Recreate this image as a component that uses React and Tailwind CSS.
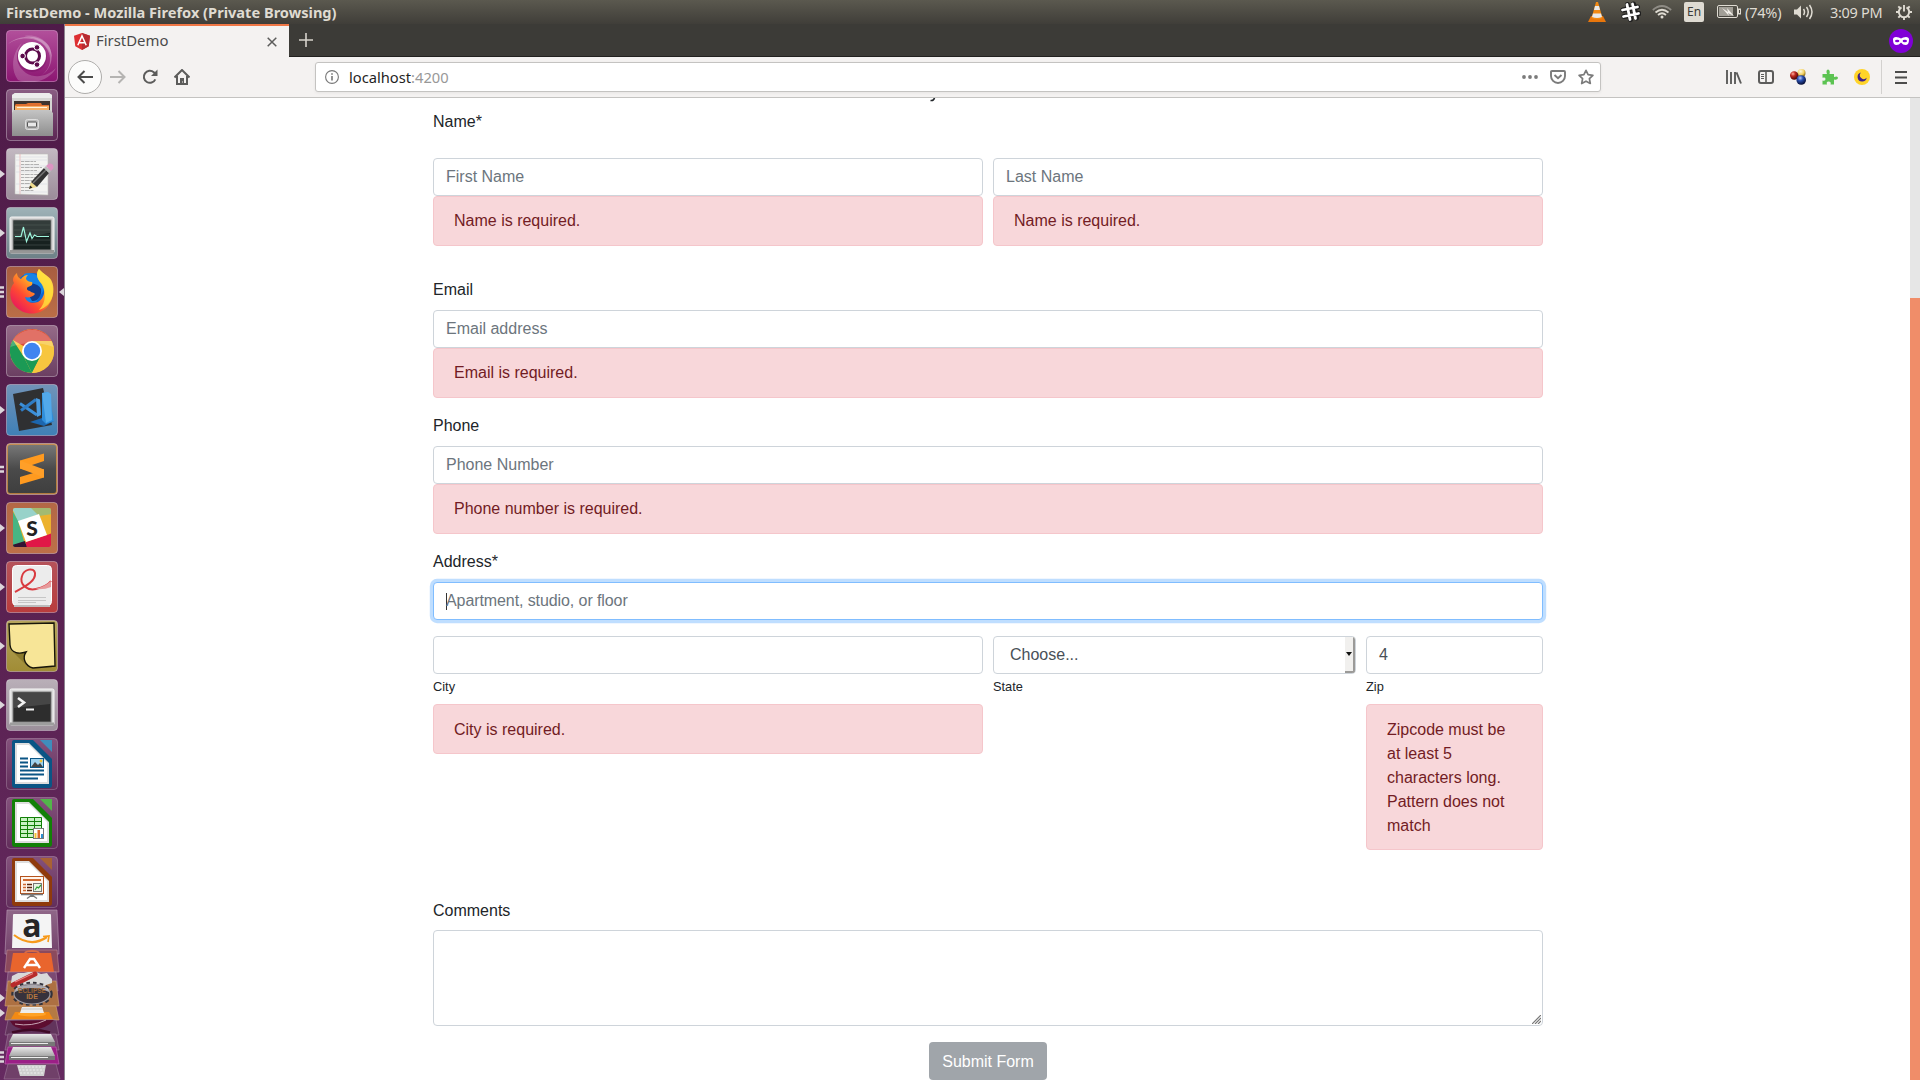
import React from "react";

const UI = "font-['Noto_Sans',sans-serif]";

/* ---------- Launcher icons (52x52 tiles) ---------- */

function Tile({ from, to, border = "#ffffff", borderOpacity = 0.35, children, id }) {
  return (
    <svg width="52" height="52" viewBox="0 0 52 52" className="block shrink-0">
      <defs>
        <linearGradient id={id} x1="0" y1="0" x2="0" y2="1">
          <stop offset="0" stopColor={from} />
          <stop offset="1" stopColor={to} />
        </linearGradient>
      </defs>
      <rect x="0.5" y="0.5" width="51" height="51" rx="3.5" fill={`url(#${id})`} stroke={border} strokeOpacity={borderOpacity} />
      {children}
    </svg>
  );
}

const DashIcon = () => (
  <Tile id="t-dash" from="#b2509b" to="#8c1672" border="#e9a8dc" borderOpacity={0.5}>
    <path d="M2 14C14 4 34 4 43 16C49 28 44 40 36 45C48 36 46 20 34 12C24 6 10 8 2 14Z" fill="#fff" opacity="0.28" />
    <path d="M12 50C4 40 6 22 16 13C8 24 10 36 20 43C30 49 42 46 50 38C44 50 26 56 12 50Z" fill="#fff" opacity="0.2" />
    <path d="M18 6C34 3 46 14 46 28C42 14 32 8 18 6Z" fill="#fff" opacity="0.2" />
    <circle cx="26" cy="27" r="15" fill="#6e0d5c" opacity="0.3" />
    <circle cx="26" cy="26" r="14" fill="#fff" />
    <circle cx="26.500" cy="26" r="7" fill="none" stroke="#5c0b4b" strokeWidth="3" />
    <g fill="#5c0b4b" stroke="#fff" strokeWidth="1">
      <circle cx="16.600" cy="26" r="2.800" />
      <circle cx="31" cy="17.400" r="2.800" />
      <circle cx="31" cy="34.600" r="2.800" />
    </g>
  </Tile>
);

const FilesIcon = () => (
  <Tile id="t-files" from="#8a5d83" to="#5c2754">
    <path d="M6 6L9 4H43L46 6V44H6Z" fill="#d5d5d3" />
    <path d="M6 6L9 4H43L46 6V9H6Z" fill="#ececec" />
    <rect x="8" y="12" width="36" height="12" fill="#3e342f" />
    <path d="M9 16L10 15H20L22 14H35L36 16H43V22H9Z" fill="#e07030" />
    <rect x="9" y="17" width="34" height="5" fill="#f6b067" />
    <rect x="11" y="18" width="30" height="1" fill="#fff1dd" />
    <path d="M6 24L8 21H44L47 24V47H6Z" fill="url(#drawer)" />
    <defs>
      <linearGradient id="drawer" x1="0" y1="0" x2="0" y2="1">
        <stop offset="0" stopColor="#c4c4c4" />
        <stop offset="1" stopColor="#8e8e8e" />
      </linearGradient>
    </defs>
    <rect x="19.5" y="30.5" width="13" height="10" rx="2" fill="#bcbcbc" stroke="#dedede" />
    <rect x="21.5" y="33" width="9" height="5" rx="0.5" fill="#e8e8e8" stroke="#555" />
  </Tile>
);

const EditorIcon = () => (
  <Tile id="t-edit" from="#c3b9c2" to="#9b8c99">
    <path d="M9 6H42V47L9 46Z" fill="#f3f3f1" stroke="#bdbdb9" strokeWidth="0.6" />
    <path d="M14 6V46" stroke="#eeb2b2" strokeWidth="0.8" />
    <g stroke="#cdd3de" strokeWidth="0.5">
      <path d="M10 9H41M10 12H41M10 18H41M10 24H41M10 36H41M10 44H41" />
    </g>
    <path
      d="M15 13.5H30M15 16.5H33M15 19.5H36M15 22.5H31M15 26.5H34M15 29.5H30M15 32.5H26M15 35.5H25M15 39.5H23M15 42.5H28"
      stroke="#a9a9a9"
      strokeWidth="0.9"
      strokeDasharray="3 0.7 5 0.7"
    />
    <path d="M23 41L25 34L31 39Z" fill="#f0dc8c" />
    <path d="M25 34L38 20L43 25L31 39Z" fill="#333" />
    <path d="M27 35L40 22" stroke="#777" strokeWidth="1.5" />
    <path d="M38 20L40 18L45 23L43 25Z" fill="#bdbdbd" />
    <path d="M40 18L43 15.5Q48 15 47.5 20L45 23Z" fill="#dd94c2" />
    <path d="M23 41L24 37.5L26.5 39.5Z" fill="#222" />
  </Tile>
);

const MonitorIcon = () => (
  <Tile id="t-mon" from="#9fb3b8" to="#6d8087">
    <rect x="4" y="10" width="44" height="36" rx="1.5" fill="#d6d6d6" stroke="#f5f5f5" />
    <rect x="4" y="43" width="44" height="3.5" fill="#969696" />
    <rect x="7" y="13" width="38" height="30" fill="#17211f" stroke="#8a8a8a" />
    <path d="M8 14H44V26L8 32Z" fill="#fff" opacity="0.12" />
    <path d="M8 18H44M8 23H44M8 28H44M8 33H44M8 38H44" stroke="#54605e" strokeWidth="0.5" />
    <path d="M9 29.500H15L17.500 20L20.500 34.500L24 26L26 31.500L28.500 28L31 29.500H43" fill="none" stroke="#9ff5dd" strokeWidth="1.200" />
  </Tile>
);

const FirefoxIcon = () => (
  <Tile id="t-ff" from="#a75d40" to="#bb6e47">
    <defs>
      <linearGradient id="ffbody" x1="0.9" y1="0" x2="0.1" y2="0.9">
        <stop offset="0" stopColor="#fff25a" />
        <stop offset="0.4" stopColor="#ffad24" />
        <stop offset="0.7" stopColor="#ff4a32" />
        <stop offset="1" stopColor="#e7155f" />
      </linearGradient>
    </defs>
    <circle cx="26" cy="24" r="17" fill="#0a66d6" />
    <path d="M18 8C30 4 38 14 38 24L30 36H16Z" fill="#1583e6" />
    <path d="M18 20C24 15 33 18 35 23C36 30 31 36 26 35Z" fill="#123c8c" />
    <path d="M11 7C7 10 6 14 8 17C2 24 4 35 9 40C18 50 34 50 42 40C49 31 48 20 46 16C45 11 37 8 33 3C29 8 32 14 36 18C40 23 39 32 32 36C26 38 20 36 19 31C22 32 27 31 29 28C28 26 25 27 24 25C21 25 20 22 22 21C26 20 27 18 26 16C23 16 21 15 20 13C20 11 21 10 22 9C19 9 16 11 15 13C12 12 11 9 11 7Z" fill="url(#ffbody)" />
    <path d="M33 3C38 9 48 15 47 27C46 36 40 42 33 44C41 36 40 25 35 17C30 12 30 7 33 3Z" fill="#ffe13d" opacity="0.8" />
  </Tile>
);

const ChromeIcon = () => (
  <Tile id="t-chrome" from="#956b88" to="#6b3f62">
    <circle cx="26" cy="26" r="22" fill="#f7c63f" />
    <path d="M26 26L6.900 15A22 22 0 0 1 45.600 16H26Z" fill="#d9493c" />
    <path d="M6.900 15L17.300 31L26 48A22 22 0 0 1 6.900 15Z" fill="#1b9a55" />
    <path d="M17.300 31L26 48L34.700 31Z" fill="#1b9a55" />
    <path d="M34.700 31L26 48H28A22 22 0 0 0 45.600 16H26Z" fill="#f7c63f" />
    <path d="M4.500 22A22 22 0 0 1 47.500 22Q26 14 4.500 22Z" fill="#fff" opacity="0.22" />
    <circle cx="26" cy="26" r="10" fill="#fff" />
    <circle cx="26" cy="26" r="8.200" fill="#4084f0" />
  </Tile>
);

const CodeIcon = () => (
  <Tile id="t-code" from="#7193b8" to="#3f80b6">
    <path d="M7 10L37 4L46 41L13 47Z" fill="#2f3032" />
    <path d="M24 38L36 34L48 37L38 42Z" fill="#1c66ae" />
    <path d="M36 9L42 8L48 37L40 40L36 36Z" fill="#2f8edb" />
    <path d="M36 9L42 8L45 10L46 36L40 39Z" fill="#52a9ea" />
    <path d="M14 19.500L31 31" stroke="#3c8fd8" strokeWidth="3" />
    <path d="M15 26.500L30 15.500" stroke="#2f7cc4" strokeWidth="3" />
    <path d="M30 14L34 15.500L35 31L31 33Z" fill="#4a9be0" />
  </Tile>
);

const SublimeIcon = () => (
  <Tile id="t-sub" from="#c58c50" to="#b27b3d">
    <defs>
      <linearGradient id="subl" x1="0" y1="0" x2="0" y2="1">
        <stop offset="0" stopColor="#777" />
        <stop offset="0.5" stopColor="#4a4a4a" />
        <stop offset="1" stopColor="#3f3f3f" />
      </linearGradient>
    </defs>
    <rect x="2" y="2" width="48" height="48" rx="2" fill="url(#subl)" />
    <path d="M14 17.500L38 10.500V18L23 23L38 26.500V34.500L14 41.500V34L29 29.500L14 25.500Z" fill="#ff9a1f" />
    <path d="M14 17.500L38 26.500V34.500L14 25.500Z" fill="#ff9f28" />
  </Tile>
);

const SlackIcon = () => (
  <Tile id="t-slack" from="#b36846" to="#bd7048">
    <defs><clipPath id="sq"><rect x="7" y="6" width="38" height="39" rx="2" /></clipPath></defs>
    <g clipPath="url(#sq)">
      <rect x="6" y="6" width="40" height="40" fill="#ecb22e" />
      <path d="M6 6H31L33 12L12 20Z" fill="#98d2c9" />
      <path d="M25 6H46V12L33 14Z" fill="#a3ba72" />
      <path d="M6 8L12 19L20 46H6Z" fill="#47b583" />
      <path d="M20 40L41 33L46 31V46H20Z" fill="#e01747" />
      <path d="M6 43L19 39L21 46H6Z" fill="#331433" />
    </g>
    <path d="M12 19L33 12L41 33L20 40Z" fill="#fff" />
    <text x="26" y="33.500" textAnchor="middle" fontFamily="Lato, sans-serif" fontWeight="900" fontSize="21" fill="#222">S</text>
  </Tile>
);

const PdfIcon = () => (
  <Tile id="t-pdf" from="#b5535a" to="#b93c3c">
    <rect x="6.500" y="4.500" width="39" height="40" rx="4" fill="#ececec" stroke="#fff" />
    <path d="M9 31C20 25 30 20 29 12C28 6 18 8 16 15C13 24 22 30 30 28C38 26 42 24 45 20" fill="none" stroke="#d93b40" strokeWidth="2" />
    <path d="M29 28Q38 26 45 20V26Q38 29 29 28Z" fill="#e79a9b" />
    <path d="M12 36.500H40M12 39.500H40M12 41.500H30" stroke="#c6c6c6" strokeWidth="1" />
    <rect x="8" y="44" width="36" height="2" fill="#bbb" />
  </Tile>
);

const NotesIcon = () => (
  <Tile id="t-note" from="#b6a55e" to="#a08c35">
    <path d="M5 30C8 34 16 33 19 33C17 37 18 42 21 46Z" fill="#8b7a2c" />
    <path d="M3 4L48 3L49 46L27 48C19 46 16 38 20 32C14 34 5 34 4 25Z" fill="#f7e597" stroke="#17150a" strokeWidth="1.400" />
  </Tile>
);

const TerminalIcon = () => (
  <Tile id="t-term" from="#b9afb8" to="#9b8f9a">
    <rect x="4" y="10" width="44" height="36" rx="1.500" fill="#dadada" stroke="#f8f8f8" />
    <rect x="4" y="43.500" width="44" height="3" fill="#9d9d9d" />
    <rect x="7" y="13" width="38" height="30" fill="#2d2d2d" stroke="#777" />
    <path d="M8 14H44V25L8 29Z" fill="#fff" opacity="0.12" />
    <path d="M12 19L18 23.500L12 28" fill="none" stroke="#f2f2f2" strokeWidth="2.600" />
    <path d="M20 30.500H28" stroke="#f2f2f2" strokeWidth="2" />
  </Tile>
);

function OfficePage({ id, dark, light, children }) {
  return (
    <Tile id={id} from="#84527c" to="#622e5b" borderOpacity={0.22}>
      <path d="M8 2H27L46 21V47Q46 50 43 50H9Q6 50 6 47V4Q6 2 8 2Z" fill={dark} />
      <path d="M9 5H23L43 25V46H9Z" fill="#dedede" />
      <path d="M11 44V7H23L41 25V44Z" fill="#fff" />
      <path d="M34 2H46V14Z" fill={light} />
      {children}
    </Tile>
  );
}

const WriterIcon = () => (
  <OfficePage id="t-wr" dark="#0a5585" light="#3f8dbb">
    <path d="M14 20.500H22M14 24.500H22M14 28.500H22M14 32.500H38M14 36.500H38M14 40.500H32" stroke="#0a5585" strokeWidth="2" />
    <rect x="24.500" y="20.500" width="13" height="9" fill="#9fd2ee" stroke="#0a5585" />
    <path d="M25 29L29 24L32 27L34 25L37 29Z" fill="#444" />
    <circle cx="35" cy="23" r="1.400" fill="#f3c334" />
  </OfficePage>
);

const CalcIcon = () => (
  <OfficePage id="t-ca" dark="#128007" light="#52b54a">
    <rect x="14" y="20" width="22" height="21" fill="#c9f2c4" />
    <path d="M14.500 20.500H35.500V40.500H14.500ZM14 24.500H36M14 28.500H36M14 32.500H36M14 36.500H36M21.500 20V41M28.500 20V41" fill="none" stroke="#128007" />
    <rect x="27.500" y="31.500" width="10" height="10" fill="#fff" stroke="#777" />
    <rect x="28.500" y="36" width="2" height="5" fill="#f3c334" />
    <rect x="31.500" y="33" width="2.500" height="8" fill="#d9692a" />
    <rect x="35" y="37" width="2" height="4" fill="#2d8fd0" />
  </OfficePage>
);

const ImpressIcon = () => (
  <OfficePage id="t-im" dark="#8f3a0c" light="#a86234">
    <rect x="14.500" y="20.500" width="23" height="17" fill="#fff5ec" stroke="#b5521c" />
    <rect x="17" y="23" width="18" height="2" fill="#cf6a32" />
    <path d="M17 28.500H20M17 31.500H20M17 34.500H20" stroke="#cf6a32" strokeWidth="1.600" />
    <path d="M21 28.500H26M21 31.500H26M21 34.500H26" stroke="#5b2a12" strokeWidth="1.600" />
    <rect x="27.500" y="27.500" width="8" height="8" fill="#e7f5e3" stroke="#777" />
    <path d="M29 34L31 31L32.500 32L35 29" stroke="#2e9d35" fill="none" strokeWidth="1.200" />
    <path d="M15 38.500H37M26 38V41M26 39L21 42.500M26 39L31 42.500" stroke="#777" strokeWidth="1.400" />
  </OfficePage>
);

/* Folded icons at the foot of the launcher, 64x172 */
const FoldedStack = () => (
  <svg width="64" height="172" viewBox="0 0 64 172" className="block shrink-0 overflow-visible">
    <defs>
      <linearGradient id="amz" x1="0" y1="0" x2="0" y2="1">
        <stop offset="0" stopColor="#8f6788" />
        <stop offset="1" stopColor="#73416b" />
      </linearGradient>
      <linearGradient id="disk" x1="0" y1="0" x2="0" y2="1">
        <stop offset="0" stopColor="#e8e8e8" />
        <stop offset="1" stopColor="#a8a8a8" />
      </linearGradient>
    </defs>
    <path d="M7 2H57L59 46H5Z" fill="url(#amz)" stroke="#b99ab4" strokeOpacity="0.600" />
    <path d="M13 7Q13 6 14 6H50Q51 6 51 7L52 40H12Z" fill="#f4f4f4" />
    <text x="32" y="29" textAnchor="middle" fontFamily="'Open Sans', sans-serif" fontWeight="700" fontSize="32" fill="#262626">a</text>
    <path d="M14 27Q31 40 47 29" fill="none" stroke="#f79a1c" strokeWidth="2.200" />
    <path d="M43 28.500L49 28L48 34" fill="none" stroke="#f79a1c" strokeWidth="1.600" />

    <path d="M7 42H57L59 64H5Z" fill="#8b4a5d" stroke="#c89aa4" strokeOpacity="0.500" />
    <path d="M13 45H51L54 64H10Z" fill="#e9652d" />
    <path d="M25 45Q26 43 32 43Q38 43 39 45" fill="none" stroke="#d96b45" strokeWidth="2" />
    <path d="M24 60L30 51H34L40 60M26 57H38" fill="none" stroke="#fff" strokeWidth="2.400" />

    <path d="M8 64H56L58 83H6Z" fill="#7b4a73" stroke="#b794b1" strokeOpacity="0.500" />
    <path d="M8 73H56L59 98H5Z" fill="#ad7042" stroke="#d3a57d" strokeOpacity="0.600" />
    <path d="M12 68L18 65H24L28 64H36L41 66L47 65L49 68L52 71V75L46 77L42 80H24L16 78L11 75Z" fill="#d9d9d9" />
    <path d="M13 77L35 66" stroke="#b72b2b" strokeWidth="5" strokeLinecap="round" />
    <path d="M15 74L33 65.500" stroke="#e98282" strokeWidth="1.200" />

    <ellipse cx="32" cy="86" rx="19" ry="10.500" fill="none" stroke="#33323a" strokeWidth="3.500" strokeDasharray="3.500 3" />
    <ellipse cx="32" cy="86" rx="18" ry="10" fill="#37323c" stroke="#9b98a0" strokeWidth="1.200" />
    <path d="M15 84Q32 76 49 84L48 80Q32 73 16 80Z" fill="#c7c6ca" opacity="0.8" />
    <text x="32" y="85" textAnchor="middle" fontFamily="'Liberation Sans', sans-serif" fontWeight="700" fontSize="6.500" fill="#9c6432">ECLIPSE</text>
    <text x="32" y="91" textAnchor="middle" fontFamily="'Liberation Sans', sans-serif" fontWeight="700" fontSize="7" fill="#b8793f">IDE</text>

    <path d="M8 98H56L59 112H5Z" fill="#b57a43" stroke="#d3a57d" strokeOpacity="0.600" />
    <path d="M15 104H49L53 111H11Z" fill="#f38a13" />
    <ellipse cx="32" cy="106" rx="14" ry="2.500" fill="#ffa227" />
    <path d="M22 99H42L44 105H20Z" fill="#ededed" />
    <path d="M21 101H43" stroke="#c9c9c9" />

    <path d="M8 112H56L59 127H5Z" fill="#62345c" stroke="#a886a3" strokeOpacity="0.500" />
    <path d="M10 113Q14 122 30 121.500Q46 122 54 112Z" fill="#5d0d30" />
    <path d="M15 116Q32 119 46 112" stroke="#c7a5b4" strokeWidth="1" fill="none" />
    <path d="M12 124.500Q32 119 50 124.500" fill="none" stroke="#3f0a26" strokeWidth="2.500" />

    <path d="M8 126H56L59 142H5Z" fill="#75436e" stroke="#a886a3" strokeOpacity="0.500" />
    <path d="M8 139H56L59 156H5Z" fill="#9b1f86" stroke="#c567b7" strokeOpacity="0.600" />
    <path d="M13 126H51L55 134H9Z" fill="url(#disk)" />
    <path d="M9 134H55V138H9Z" fill="#777" />
    <path d="M11 135.500H48" stroke="#e9e9e9" strokeWidth="1" />

    <path d="M13 139H51L55 148H9Z" fill="url(#disk)" />
    <path d="M9 148H55V152H9Z" fill="#777" />
    <path d="M11 149.500H48" stroke="#efefef" strokeWidth="1" />

    <path d="M8 156H56L60 171H4Z" fill="#704069" stroke="#a886a3" strokeOpacity="0.500" />
    <path d="M17 157H46L44 168H20Z" fill="#cfcfcf" />
    <path d="M18 159H45M19 162H44M20 165H43" stroke="#efefef" strokeWidth="1.200" strokeDasharray="2 1.500" />
  </svg>
);

const LAUNCHER = [
  { icon: DashIcon, mark: 0 },
  { icon: FilesIcon, mark: 0 },
  { icon: EditorIcon, mark: 1 },
  { icon: MonitorIcon, mark: 1 },
  { icon: FirefoxIcon, mark: 3, active: true },
  { icon: ChromeIcon, mark: 0 },
  { icon: CodeIcon, mark: 1 },
  { icon: SublimeIcon, mark: 2 },
  { icon: SlackIcon, mark: 1 },
  { icon: PdfIcon, mark: 1 },
  { icon: NotesIcon, mark: 1 },
  { icon: TerminalIcon, mark: 1 },
  { icon: WriterIcon, mark: 0 },
  { icon: CalcIcon, mark: 0 },
  { icon: ImpressIcon, mark: 0 },
];

/* Running-window marks: an arrow for one window, bars for several */
function Mark({ n }) {
  return (
    <svg width="6" height="12" viewBox="0 0 6 12" className="block shrink-0">
      {n === 1 && <path d="M0 2L5 6L0 10Z" fill="#dcd6db" />}
      {n === 2 && <path d="M0 4H4M0 8.500H4" stroke="#dcd6db" strokeWidth="2.400" />}
      {n === 3 && <path d="M0 1.500H4M0 6H4M0 10.500H4" stroke="#dcd6db" strokeWidth="2.400" />}
    </svg>
  );
}

function Launcher() {
  return (
    <aside className="relative flex w-[65px] shrink-0 flex-col overflow-hidden border-r border-[#8d8390] bg-gradient-to-b from-[#4f1b49] via-[#592150] to-[#652a60] pt-[6px]">
      <div className="flex flex-col gap-[7px]">
        {LAUNCHER.map(({ icon: Icon, mark, active }, i) => (
          <div key={i} className="flex h-[52px] items-center">
            <Mark n={mark} />
            <Icon />
            {active && (
              <svg width="6" height="12" viewBox="0 0 6 12" className="ml-px block shrink-0">
                <path d="M5 2L0 6L5 10Z" fill="#dcd6db" />
              </svg>
            )}
          </div>
        ))}
      </div>
      <FoldedStack />
      <svg width="6" height="70" viewBox="0 0 6 70" className="absolute left-0 top-[946px]">
        <path d="M0 24L5 28L0 32Z M0 39L5 43L0 47Z" fill="#dcd6db" />
      </svg>
      <svg width="6" height="12" viewBox="0 0 6 12" className="absolute left-0 top-[1027px]">
        <path d="M0 1.500H4M0 6H4M0 10.500H4" stroke="#dcd6db" strokeWidth="2.400" />
      </svg>
    </aside>
  );
}

/* ---------- System menu bar ---------- */

function MenuBar() {
  return (
    <header className={`flex h-6 shrink-0 items-center bg-gradient-to-b from-[#5b594f] to-[#403e39] pl-[6px] pr-[8px] text-[#dfdbd2] ${UI}`}>
      <span className="w-[340px] whitespace-nowrap text-[14.600px] font-bold leading-6">
        FirstDemo - Mozilla Firefox (Private Browsing)
      </span>
      <div className="ml-auto flex items-center">
        <svg width="18" height="20" viewBox="0 0 18 20" className="mr-[13px]">
          <path d="M3 14H15L18 20H0Z" fill="#e8760c" />
          <path d="M8 0H10L14.500 16Q9 19 3.500 16Z" fill="#f28a14" />
          <path d="M7 4H11L12 8H6Z M5 11.500H13L14 15Q9 17 4 15Z" fill="#e9e9e9" />
        </svg>
        <svg width="22" height="22" viewBox="0 0 22 22" className="mr-[11px]">
          <g fill="none" strokeLinecap="round">
            <path d="M8.500 3.500L11.500 18.500M14.500 3L17.500 17M4 9L18.500 6M5 15.500L20 12.500" stroke="#1f1f1f" strokeWidth="5" />
            <path d="M8 3.500L11 18.500M13.500 3L16.500 17.500M3.500 9L18.500 6M4.500 15.500L19.500 12.500" stroke="#fff" strokeWidth="2.800" />
          </g>
        </svg>
        <svg width="20" height="16" viewBox="0 0 20 16" className="mr-[12px]">
          <g fill="none" strokeWidth="1.700">
            <path d="M0.800 6Q10 -2 19.200 6" stroke="#8f8c85" />
            <path d="M3.500 8.500Q10 3 16.500 8.500" stroke="#dfdbd2" />
            <path d="M6 11Q10 7.500 14 11" stroke="#dfdbd2" />
          </g>
          <circle cx="10" cy="13" r="1.500" fill="#dfdbd2" />
        </svg>
        <span className="mr-[13px] flex h-5 w-5 items-center justify-center rounded-[2px] bg-[#dfdbd2] text-[12px] text-[#3c3b37]">En</span>
        <svg width="24" height="14" viewBox="0 0 24 14" className="mr-[4px]">
          <rect x="0.500" y="0.500" width="20" height="12" rx="1.500" fill="none" stroke="#dfdbd2" />
          <rect x="21.500" y="4" width="2" height="5" fill="none" stroke="#dfdbd2" />
          <rect x="2" y="2" width="14" height="9" fill="#a29f97" />
          <path d="M5 3L11 7L10 3L17 11L11 8L12 11Z" fill="#f2efe9" />
        </svg>
        <span className="mr-[12px] w-[37px] whitespace-nowrap text-[14.500px] leading-6 tracking-[-0.2px]">(74%)</span>
        <svg width="20" height="16" viewBox="0 0 20 16" className="mr-[16px]">
          <path d="M0 5.500H3L7 1.500V14.500L3 10.500H0Z" fill="#dfdbd2" />
          <path d="M9.500 5Q11.500 8 9.500 11M12.500 3Q16 8 12.500 13M15.500 1Q20.500 8 15.500 15" fill="none" stroke="#dfdbd2" strokeWidth="1.500" />
        </svg>
        <span className="mr-[13px] w-[53px] whitespace-nowrap text-[14.500px] leading-6 tracking-[-0.3px]">3:09 PM</span>
        <svg width="16" height="16" viewBox="0 0 16 16">
          <path d="M5.500 3.400A5.200 5.200 0 1 0 10.500 3.400" fill="none" stroke="#dfdbd2" strokeWidth="2" />
          <path d="M8 1V7.500M0 8H2.500M13.500 8H16M8 13.500V16M2.300 2.300L4 4M13.700 2.300L12 4M2.300 13.700L4 12M13.700 13.700L12 12" stroke="#dfdbd2" strokeWidth="1.900" />
        </svg>
      </div>
    </header>
  );
}

/* ---------- Browser chrome ---------- */

function TabStrip() {
  return (
    <div className={`flex h-[33px] shrink-0 border-b border-[#22211f] bg-[#3c3b37] ${UI}`}>
      <div className="-mb-px flex h-[33px] w-[224px] items-center border-t-2 border-[#f07746] bg-[#f4f2f1] pl-[9px] pr-[12px]">
        <svg width="16" height="17" viewBox="0 0 16 17" className="shrink-0">
          <path d="M8 0L16 2.800L14.700 13.200L8 17L1.300 13.200L0 2.800Z" fill="#dd2f32" />
          <path d="M8 0L16 2.800L14.700 13.200L8 17Z" fill="#b82b31" />
          <path d="M3.800 12.300L8 2.900L12.200 12.300M5.500 9.700H10.500" fill="none" stroke="#fff" strokeWidth="1.500" />
        </svg>
        <span className="relative -top-px ml-[6px] text-[14.900px] text-[#4a4a4a]">FirstDemo</span>
        <svg width="10" height="10" viewBox="0 0 10 10" className="ml-auto">
          <path d="M0.700 0.700L9.300 9.300M9.300 0.700L0.700 9.300" stroke="#5c5c5b" strokeWidth="1.500" />
        </svg>
      </div>
      <svg width="14" height="14" viewBox="0 0 14 14" className="ml-[10px] mt-[9px]">
        <path d="M7 0V14M0 7H14" stroke="#d6d3cc" strokeWidth="1.600" />
      </svg>
      <svg width="24" height="24" viewBox="0 0 24 24" className="ml-auto mr-[7px] mt-[5px]">
        <circle cx="12" cy="12" r="12" fill="#8000d7" />
        <path d="M4 10.500Q4 8 7 8Q10 8 12 9.500Q14 8 17 8Q20 8 20 10.500Q20 16 16.500 16Q14 16 12 13.500Q10 16 7.500 16Q4 16 4 10.500Z" fill="#fff" />
        <ellipse cx="8.200" cy="12" rx="2.200" ry="1.300" fill="#8000d7" />
        <ellipse cx="15.800" cy="12" rx="2.200" ry="1.300" fill="#8000d7" />
      </svg>
    </div>
  );
}

function Toolbar() {
  return (
    <div className={`flex h-[41px] shrink-0 items-center border-b border-[#c4c3c1] bg-[#f4f2f1] pl-[3px] ${UI}`}>
      <span className="flex h-[34px] w-[34px] items-center justify-center rounded-full border border-[#aeadab] bg-[#fcfcfb]">
        <svg width="16" height="14" viewBox="0 0 16 14">
          <path d="M16 7H1.500M7.500 1L1.500 7L7.500 13" fill="none" stroke="#4c4c4b" strokeWidth="2" />
        </svg>
      </span>
      <svg width="16" height="14" viewBox="0 0 16 14" className="ml-[8px]">
        <path d="M0 7H14.500M8.500 1L14.500 7L8.500 13" fill="none" stroke="#b5b4b2" strokeWidth="2" />
      </svg>
      <svg width="16" height="16" viewBox="0 0 16 16" className="ml-[16px]">
        <path d="M13.300 10.300A6 6 0 1 1 11.800 3.300L13.500 5" fill="none" stroke="#5c5c5b" strokeWidth="2" />
        <path d="M15.500 0.500V7H9Z" fill="#5c5c5b" />
      </svg>
      <svg width="16" height="16" viewBox="0 0 16 16" className="ml-[16px]">
        <path d="M0.500 8.500L8 1L15.500 8.500" fill="none" stroke="#5c5c5b" strokeWidth="2" />
        <path d="M3 7V15H13V7" fill="none" stroke="#5c5c5b" strokeWidth="2" />
        <path d="M6 15V9H10V15H8.500V12H8V15Z" fill="#5c5c5b" />
      </svg>

      <div className="ml-[125px] flex h-[30px] w-[1286px] items-center rounded-[3px] border border-[#c4c3c1] bg-white pl-[9px] pr-[6px] shadow-[0_1px_3px_rgba(0,0,0,0.06)]">
        <svg width="14" height="14" viewBox="0 0 14 14">
          <circle cx="7" cy="7" r="6.400" fill="none" stroke="#777" strokeWidth="1.100" />
          <path d="M7 6V10.500M7 3.300V4.800" stroke="#777" strokeWidth="1.600" />
        </svg>
        <span className="ml-[10px] text-[14.700px] text-[#1f1f1f]">
          localhost<span className="text-[#989898]">:4200</span>
        </span>
        <svg width="16" height="4" viewBox="0 0 16 4" className="ml-auto">
          <circle cx="2" cy="2" r="1.900" fill="#7b7b7b" />
          <circle cx="8" cy="2" r="1.900" fill="#7b7b7b" />
          <circle cx="14" cy="2" r="1.900" fill="#7b7b7b" />
        </svg>
        <svg width="16" height="14" viewBox="0 0 16 14" className="ml-[12px]">
          <path d="M2 1H14Q15 1 15 2V6A7 7 0 0 1 1 6V2Q1 1 2 1Z" fill="none" stroke="#7b7b7b" strokeWidth="1.900" />
          <path d="M4.500 5L8 8.300L11.500 5" fill="none" stroke="#7b7b7b" strokeWidth="1.900" />
        </svg>
        <svg width="16" height="16" viewBox="0 0 16 16" className="ml-[12px]">
          <path d="M8 1.300L10.100 5.700L14.900 6.300L11.400 9.700L12.300 14.500L8 12.200L3.700 14.500L4.600 9.700L1.100 6.300L5.900 5.700Z" fill="none" stroke="#7b7b7b" strokeWidth="1.700" strokeLinejoin="round" />
        </svg>
      </div>

      <div className="ml-auto flex h-full items-center">
        <svg width="16" height="14" viewBox="0 0 16 14">
          <path d="M1 0V14M5 2V14M9 2V14M10.500 2.300L15 13.500" stroke="#5c5c5b" strokeWidth="1.900" fill="none" />
        </svg>
        <svg width="16" height="14" viewBox="0 0 16 14" className="ml-[16px]">
          <rect x="1" y="1" width="14" height="12" rx="2" fill="none" stroke="#5c5c5b" strokeWidth="2" />
          <path d="M8 1V13" stroke="#5c5c5b" strokeWidth="1.600" />
          <path d="M3 4.500H6M3 6.500H6M3 8.500H6" stroke="#5c5c5b" strokeWidth="1" />
        </svg>
        <svg width="16" height="16" viewBox="0 0 16 16" className="ml-[16px]">
          <defs>
            <radialGradient id="ballr" cx="0.35" cy="0.3" r="0.7"><stop offset="0" stopColor="#ffb0a0" /><stop offset="0.4" stopColor="#c02a20" /><stop offset="1" stopColor="#4a0606" /></radialGradient>
            <radialGradient id="bally" cx="0.4" cy="0.3" r="0.7"><stop offset="0" stopColor="#fffbe0" /><stop offset="0.6" stopColor="#f2d060" /><stop offset="1" stopColor="#8a6a10" /></radialGradient>
            <radialGradient id="ballb" cx="0.4" cy="0.3" r="0.7"><stop offset="0" stopColor="#b8ccff" /><stop offset="0.4" stopColor="#2a50b0" /><stop offset="1" stopColor="#060c30" /></radialGradient>
          </defs>
          <circle cx="11.500" cy="4" r="4" fill="url(#bally)" />
          <circle cx="4.200" cy="6.500" r="4.200" fill="url(#ballr)" />
          <circle cx="11.200" cy="11" r="4.800" fill="url(#ballb)" />
        </svg>
        <svg width="16" height="16" viewBox="0 0 16 16" className="ml-[16px]">
          <path d="M0.500 5H5Q3.500 1 6 0.500Q8.500 1 7.500 5H12V8Q16 6.500 16 9Q15.500 11.500 12 10.500V15.500H8.500Q9.500 12.500 6.500 12.500Q4 12.500 5 15.500H0.500V11.500Q3.500 12.500 3.500 10Q3.500 8 0.500 8.800Z" fill="#5cc352" />
        </svg>
        <svg width="16" height="16" viewBox="0 0 16 16" className="ml-[16px]">
          <circle cx="8" cy="8" r="8" fill="#ffd429" />
          <path d="M7 3.500A4.600 4.600 0 1 0 12.700 8.800A3.800 3.800 0 0 1 7 3.500Z" fill="#40208a" />
        </svg>
        <span className="ml-[11px] h-[34px] w-px bg-[#d3d1cf]" />
        <svg width="12" height="13" viewBox="0 0 12 13" className="ml-[13px] mr-[13px]">
          <path d="M0 1H12M0 6.500H12M0 12H12" stroke="#4c4c4b" strokeWidth="1.900" />
        </svg>
      </div>
    </div>
  );
}

/* ---------- Form ---------- */

const FIELD = "flex h-[38px] items-center rounded-[4px] border border-[#ced4da] bg-white px-3 text-[#6c757d]";

const Alert = ({ children, low }) => (
  <div className={`rounded-[4px] border border-[#f5c6cb] bg-[#f8d7da] px-5 text-[#721c24] ${low ? "pb-[11px] pt-[13px]" : "py-3"}`}>
    {children}
  </div>
);

function Group({ label, placeholder, error }) {
  return (
    <div className="mb-4">
      <div className="mb-2">{label}</div>
      <div className={FIELD}>{placeholder}</div>
      <Alert>{error}</Alert>
    </div>
  );
}

const Caption = ({ children }) => <div className="mb-[8px] h-[22px] pt-px text-[12.800px] leading-6">{children}</div>;

function FormPage() {
  return (
    <main className="relative flex min-w-0 flex-1 justify-center overflow-hidden bg-white pl-px font-['Liberation_Sans',sans-serif] text-[16px] leading-6 text-[#212529]">
      <div className="w-[1110px] pt-[12px]">
        <div className="mb-[24px]">Name*</div>
        <div className="mb-8 grid grid-cols-2 gap-[10px]">
          <div>
            <div className={FIELD}>First Name</div>
            <Alert>Name is required.</Alert>
          </div>
          <div>
            <div className={FIELD}>Last Name</div>
            <Alert>Name is required.</Alert>
          </div>
        </div>
        <Group label="Email" placeholder="Email address" error="Email is required." />
        <Group label="Phone" placeholder="Phone Number" error="Phone number is required." />
        <div className="mb-2">Address*</div>
        <div className="mb-4 flex h-[38px] items-center rounded-[4px] border border-[#80bdff] bg-white px-3 tracking-[-0.090px] text-[#6c757d] shadow-[0_0_0_3.200px_rgba(0,123,255,0.25)]">
          <span className="-mr-px h-[17px] w-px bg-[#333]" />
          Apartment, studio, or floor
        </div>
        <div className="mb-[49px] grid grid-cols-[550px_363px_1fr] items-start gap-[10px]">
          <div>
            <div className={FIELD} />
            <Caption>City</Caption>
            <Alert low>City is required.</Alert>
          </div>
          <div>
            <div className="flex h-[38px] items-center overflow-hidden rounded-[4px] border border-[#ced4da] bg-white pl-4 text-[#495057]">
              <span>Choose...</span>
              <span className="ml-auto flex h-full w-[10px] items-center justify-center border-b-2 border-r-2 border-[#9b9a98] bg-[#f1f0ee]">
                <svg width="6" height="4" viewBox="0 0 6 4"><path d="M0 0H6L3 4Z" fill="#111" /></svg>
              </span>
            </div>
            <Caption>State</Caption>
          </div>
          <div>
            <div className="flex h-[38px] items-center rounded-[4px] border border-[#ced4da] px-3 text-[#495057]">4</div>
            <Caption>Zip</Caption>
            <Alert low>Zipcode must be at least 5 characters long. Pattern does not match</Alert>
          </div>
        </div>
        <div className="mb-[7px]">Comments</div>
        <div className="mb-4 flex h-24 items-end justify-end rounded-[4px] border border-[#ced4da] p-px">
          <svg width="9" height="9" viewBox="0 0 9 9">
            <path d="M0 9L9 0M3 9L9 3M6 9L9 6" stroke="#777" strokeWidth="1.200" />
          </svg>
        </div>
        <div className="flex justify-center">
          <div className="flex h-[38px] items-center rounded-[4px] bg-[#a0a5aa] px-[13px] pt-[2px] text-white">
            Submit Form
          </div>
        </div>
      </div>
      <svg width="6" height="4" viewBox="0 0 6 4" className="absolute left-[865px] top-0">
        <path d="M0.500 2.400Q3.500 3.200 4.500 0" fill="none" stroke="#212529" strokeWidth="1.600" />
      </svg>
    </main>
  );
}

export default function App() {
  return (
    <div className="flex h-[1080px] w-[1920px] flex-col overflow-hidden bg-[#3c3b37]">
      <MenuBar />
      <div className="flex min-h-0 flex-1">
        <Launcher />
        <div className="flex min-w-0 flex-1 flex-col">
          <TabStrip />
          <Toolbar />
          <div className="flex min-h-0 flex-1">
            <FormPage />
            <div className="flex w-[10px] shrink-0 flex-col bg-[#e6e6e6] pt-[200px]">
              <div className="flex-1 bg-[#f08d69]" />
            </div>
          </div>
        </div>
      </div>
    </div>
  );
}
